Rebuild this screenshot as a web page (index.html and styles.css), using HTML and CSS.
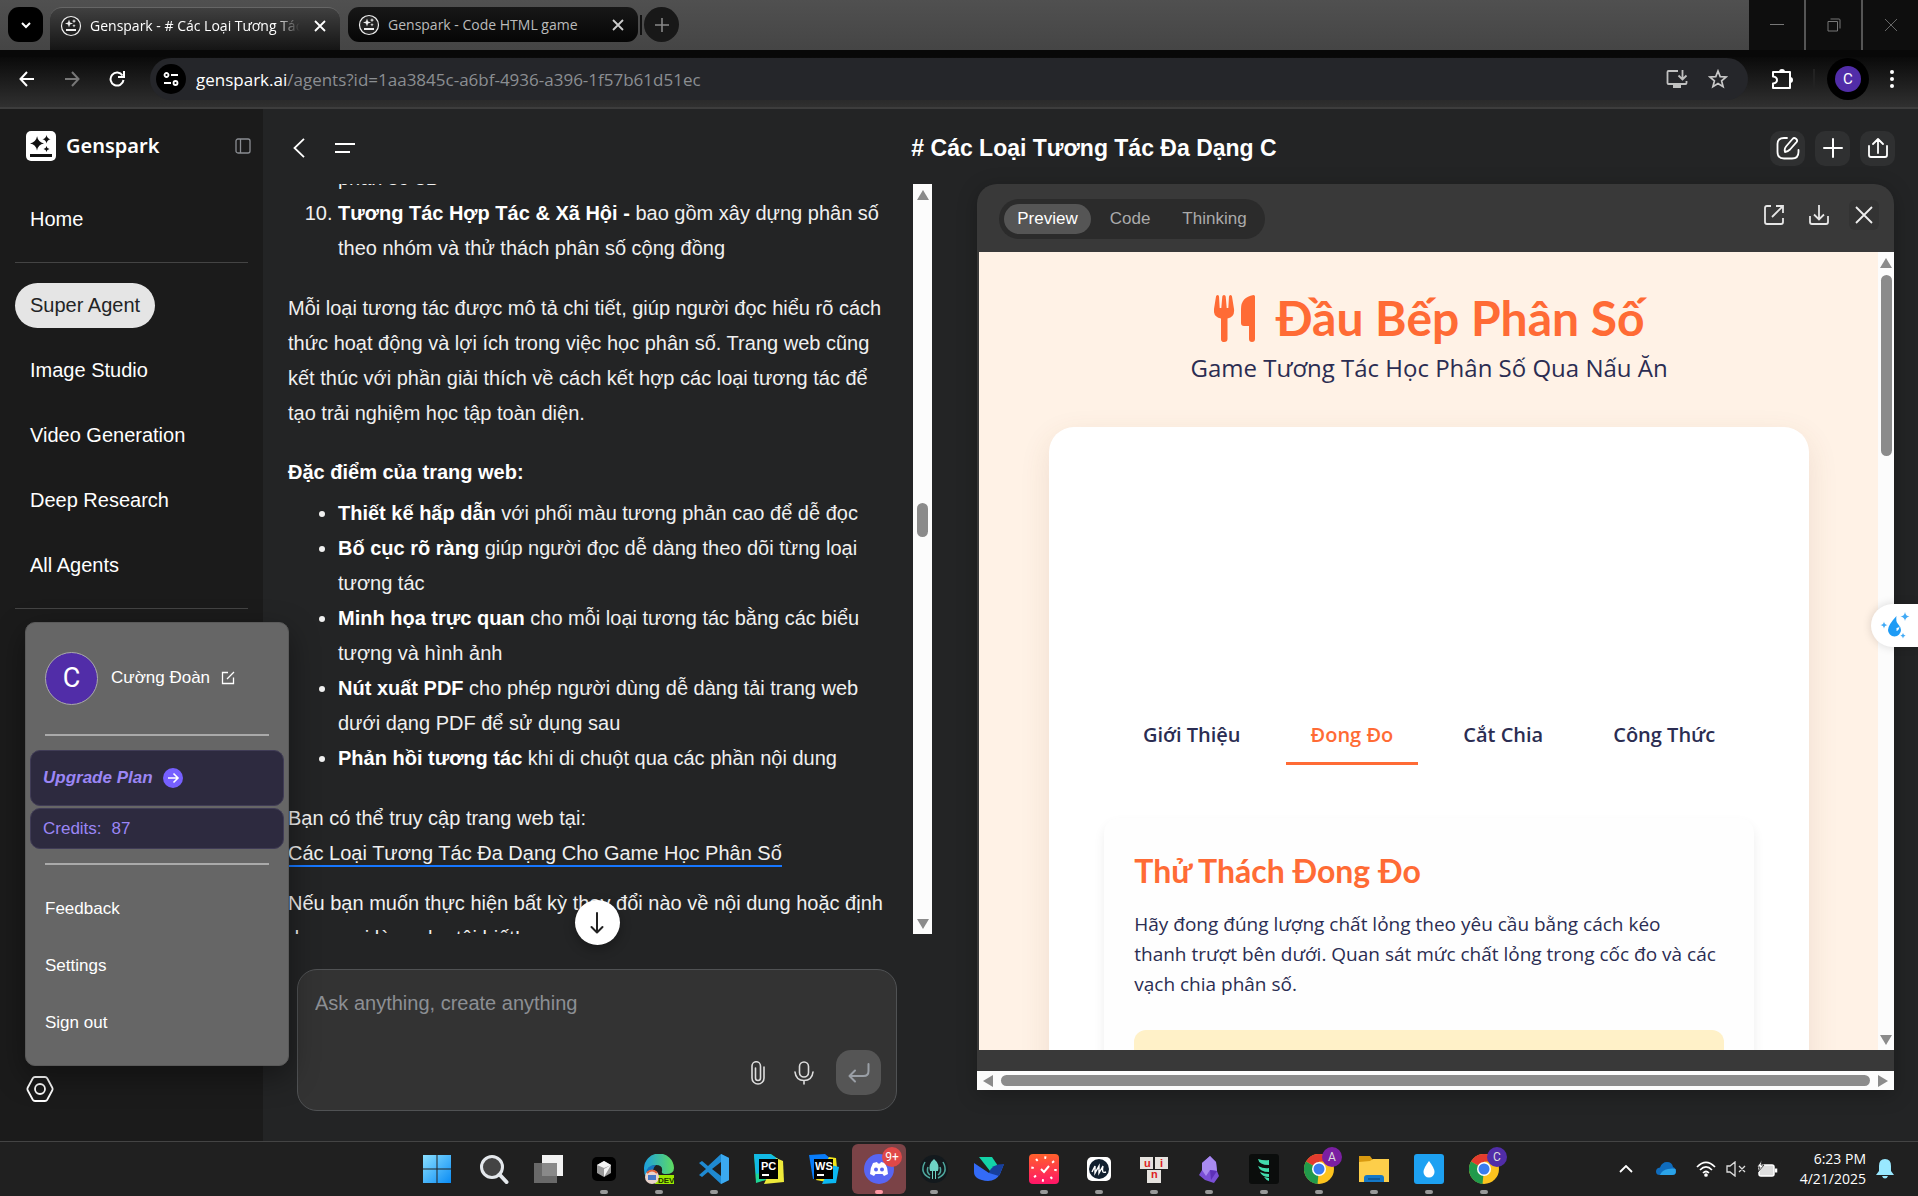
FILE: index.html
```html
<!DOCTYPE html>
<html lang="vi">
<head>
<meta charset="utf-8">
<title>Genspark - # Các Loại Tương Tác Đa Dạng C</title>
<link rel="stylesheet" href="styles.css">
</head>
<body>
<header class="browser">
  <div class="tabstrip">
    <button class="tab-search" aria-label="Search tabs"><svg width="12" height="12" viewBox="0 0 12 12"><path d="M2 4l4 4 4-4" stroke="#fff" stroke-width="2" fill="none"/></svg></button>
    <div class="tab tab-active">
      <svg class="favicon" width="22" height="22" viewBox="0 0 22 22"><circle cx="11" cy="11" r="9.500" fill="#222" stroke="#eee" stroke-width="1.200"/><path d="M9 4.500l1 3 3 1-3 1-1 3-1-3-3-1 3-1zM14 4l.6 1.500 1.500.6-1.500.6-.6 1.500-.6-1.500-1.500-.6 1.500-.6zM14 9l.5 1.200 1.200.5-1.200.5-.5 1.200-.5-1.200-1.200-.5 1.200-.5zM6 14h10v2H6z" fill="#eee"/></svg>
      <span class="tab-title">Genspark - # Các Loại Tương Tác</span>
      <button class="plain" aria-label="Close tab"><svg width="12" height="12" viewBox="0 0 12 12"><path d="M1 1l10 10M11 1L1 11" stroke="#fff" stroke-width="1.800"/></svg></button>
    </div>
    <div class="tab tab-idle">
      <svg class="favicon" width="22" height="22" viewBox="0 0 22 22"><circle cx="11" cy="11" r="9.500" fill="#222" stroke="#eee" stroke-width="1.200"/><path d="M9 4.500l1 3 3 1-3 1-1 3-1-3-3-1 3-1zM14 4l.6 1.500 1.500.6-1.500.6-.6 1.500-.6-1.500-1.500-.6 1.500-.6zM14 9l.5 1.200 1.200.5-1.200.5-.5 1.200-.5-1.200-1.200-.5 1.200-.5zM6 14h10v2H6z" fill="#eee"/></svg>
      <span class="tab-title">Genspark - Code HTML game</span>
      <button class="plain" aria-label="Close tab"><svg width="12" height="12" viewBox="0 0 12 12"><path d="M1 1l10 10M11 1L1 11" stroke="#ccc" stroke-width="1.800"/></svg></button>
    </div>
    <i class="tab-sep"></i>
    <button class="new-tab" aria-label="New tab"><svg width="14" height="14" viewBox="0 0 14 14"><path d="M7 0v14M0 7h14" stroke="#888" stroke-width="1.600"/></svg></button>
    <div class="window-controls">
      <button aria-label="Minimize"><svg width="14" height="14" viewBox="0 0 14 14"><path d="M0 6.500h14" stroke="#777"/></svg></button>
      <button aria-label="Restore"><svg width="14" height="14" viewBox="0 0 14 14" fill="none" stroke="#777"><path d="M1 3.500h9.500V13H1zM3.500 1H12q1 0 1 1v8.500"/></svg></button>
      <button aria-label="Close"><svg width="14" height="14" viewBox="0 0 14 14"><path d="M1 1l12 12M13 1L1 13" stroke="#666"/></svg></button>
    </div>
  </div>
  <div class="toolbar">
    <button class="plain nav" aria-label="Back"><svg width="16" height="16" viewBox="0 0 16 16" fill="none" stroke="#fff" stroke-width="2"><path d="M15 8H2M8 1L1.500 8 8 15"/></svg></button>
    <button class="plain nav" aria-label="Forward"><svg width="16" height="16" viewBox="0 0 16 16" fill="none" stroke="#777" stroke-width="2"><path d="M1 8h13M8 1l6.500 7L8 15"/></svg></button>
    <button class="plain nav" aria-label="Reload"><svg width="16" height="16" viewBox="0 0 16 16" fill="none" stroke="#fff" stroke-width="2"><path d="M13.500 4.500A6.500 6.500 0 1 0 14.500 9"/><path d="M15 0v6H9"/></svg></button>
    <div class="omnibox">
      <button class="site-info" aria-label="Site information"><svg width="16" height="16" viewBox="0 0 16 16" fill="none" stroke="#fff" stroke-width="1.800"><circle cx="3.500" cy="4" r="2"/><path d="M8 4h7M1 12h7"/><circle cx="12.500" cy="12" r="2"/></svg></button>
      <a class="url" href="#">genspark.ai<span>/agents?id=1aa3845c-a6bf-4936-a396-1f57b61d51ec</span></a>
      <button class="plain" aria-label="Install app"><svg width="22" height="20" viewBox="0 0 22 20" fill="none" stroke="#c0c0c0" stroke-width="1.800"><path d="M12 2H2.500Q1.500 2 1.500 3v11q0 1 1 1h17q1 0 1-1v-2M16.500 1v9M12.500 6.500l4 4 4-4"/><path d="M7 17.500h8" stroke-width="3"/></svg></button>
      <button class="plain" aria-label="Bookmark"><svg width="20" height="20" viewBox="0 0 20 20" fill="none" stroke="#c8c8c8" stroke-width="1.700"><path d="M10 2l2.200 5.600 6 .4-4.600 3.900 1.500 5.800L10 14.500l-5.100 3.200 1.500-5.800L1.800 8l6-.4z"/></svg></button>
    </div>
    <button class="plain ext" aria-label="Extensions"><svg width="22" height="22" viewBox="0 0 22 22"><path d="M2 4h17v16H2v-4.500q4-.5 4-3.500t-4-3.500z" fill="none" stroke="#fff" stroke-width="2" stroke-linejoin="round"/><path d="M8 4a3 3 0 0 1 6 0zM19 9a3 3 0 0 1 0 6z" fill="#fff"/></svg></button>
    <i class="bar-sep"></i>
    <button class="profile" aria-label="Profile"><span>C</span></button>
    <button class="plain" aria-label="Menu"><svg width="6" height="20" viewBox="0 0 6 20" fill="#fff"><circle cx="3" cy="3" r="2"/><circle cx="3" cy="10" r="2"/><circle cx="3" cy="17" r="2"/></svg></button>
  </div>
</header>

<div class="app">
  <aside class="sidebar">
    <div class="brand">
      <svg width="30" height="30" viewBox="0 0 30 30"><rect width="30" height="30" rx="5" fill="#fff"/><path d="M11 5q1 6 7 7.500-6 1-7 7-1-6-7-7 6-1.500 7-7zM20.500 4q.5 3.500 4 4.200-3.500.8-4 4.200-.5-3.400-4-4.200 3.500-.7 4-4.200zM20.500 15q.3 2.600 3 3-2.700.5-3 3-.3-2.500-3-3 2.700-.4 3-3zM4 23h22v3H4z" fill="#111"/></svg>
      <span class="brand-name">Genspark</span>
      <button class="plain" aria-label="Collapse sidebar"><svg width="16" height="16" viewBox="0 0 16 16" fill="none" stroke="#8a8d92" stroke-width="1.300"><rect x="1" y="1" width="14" height="14" rx="2"/><path d="M5.500 1v14"/></svg></button>
    </div>
    <nav class="side-nav">
      <a href="#" class="home">Home</a>
      <hr>
      <a href="#" class="current">Super Agent</a>
      <a href="#">Image Studio</a>
      <a href="#">Video Generation</a>
      <a href="#">Deep Research</a>
      <a href="#">All Agents</a>
      <hr>
    </nav>
    <button class="plain gear" aria-label="Settings"><svg width="28" height="26" viewBox="0 0 28 26" fill="none" stroke="#fff" stroke-width="1.800"><path d="M9 1h10q1.500 0 2.200 1.200l5 9.300q.8 1.500 0 3l-5 9.300Q20.500 25 19 25H9q-1.500 0-2.200-1.200l-5-9.300q-.8-1.500 0-3l5-9.300Q7.500 1 9 1z"/><circle cx="14" cy="13" r="5"/></svg></button>
    <section class="account-menu">
      <div class="account">
        <span class="avatar">C</span>
        <span>Cường Đoàn</span>
        <svg width="14" height="14" viewBox="0 0 14 14" fill="none" stroke="#fff" stroke-width="1.300"><path d="M7 1.500H1.500v11h11V6.500M6 8l7-7"/></svg>
      </div>
      <hr>
      <div class="plan">
        <a href="#" class="upgrade">Upgrade Plan <svg width="20" height="20" viewBox="0 0 20 20"><circle cx="10" cy="10" r="10" fill="#7660ff"/><path d="M5 10h9.500M10.500 5.500L15 10l-4.500 4.500" fill="none" stroke="#fff" stroke-width="1.600"/></svg></a>
        <a href="#" class="credits"><span>Credits:</span><span>87</span></a>
      </div>
      <hr>
      <a href="#" class="menu-item">Feedback</a>
      <a href="#" class="menu-item">Settings</a>
      <a href="#" class="menu-item">Sign out</a>
    </section>
  </aside>

  <main class="main">
    <header class="main-head">
      <div class="head-left">
        <button class="plain" aria-label="Back"><svg width="12" height="20" viewBox="0 0 12 20" fill="none" stroke="#fff" stroke-width="1.800"><path d="M11 .8L1.500 10l9.500 9.200"/></svg></button>
        <button class="plain" aria-label="Menu"><svg width="20" height="12" viewBox="0 0 20 12" stroke="#fff" stroke-width="1.800"><path d="M0 2h20M0 10h15"/></svg></button>
      </div>
      <h1># Các Loại Tương Tác Đa Dạng C</h1>
      <div class="head-right">
        <button aria-label="Edit"><svg width="24" height="24" viewBox="0 0 24 24" fill="none" stroke="#fff" stroke-width="1.800" stroke-linecap="round" stroke-linejoin="round"><path d="M11 2H8Q1.500 2 1.500 8v8Q1.500 22.500 8 22.500h8q6.500 0 6.500-6.500v-2"/><path d="M9 16q-1-3 1-5.500l6.500-7.500q1.500-1.800 3.500-.3 2 1.700.5 3.500L14 13.500Q12 15.500 9 16z"/></svg></button>
        <button aria-label="New"><svg width="20" height="20" viewBox="0 0 20 20" stroke="#fff" stroke-width="2" stroke-linecap="round"><path d="M10 1v18M1 10h18"/></svg></button>
        <button aria-label="Share"><svg width="20" height="20" viewBox="0 0 20 20" fill="none" stroke="#fff" stroke-width="1.800" stroke-linecap="round" stroke-linejoin="round"><path d="M1 8v9q0 2 2 2h14q2 0 2-2V8M10 15V1M5 6l5-5 5 5"/></svg></button>
      </div>
    </header>

    <div class="columns">
      <section class="chat">
        <div class="messages">
          <article class="message">
            <ol>
              <li class="tail">phân số 3D</li>
              <li value="10"><b>Tương Tác Hợp Tác &amp; Xã Hội -</b> bao gồm xây dựng phân số theo nhóm và thử thách phân số cộng đồng</li>
            </ol>
            <p>Mỗi loại tương tác được mô tả chi tiết, giúp người đọc hiểu rõ cách thức hoạt động và lợi ích trong việc học phân số. Trang web cũng kết thúc với phần giải thích về cách kết hợp các loại tương tác để tạo trải nghiệm học tập toàn diện.</p>
            <h2>Đặc điểm của trang web:</h2>
            <ul>
              <li><b>Thiết kế hấp dẫn</b> với phối màu tương phản cao để dễ đọc</li>
              <li><b>Bố cục rõ ràng</b> giúp người đọc dễ dàng theo dõi từng loại tương tác</li>
              <li><b>Minh họa trực quan</b> cho mỗi loại tương tác bằng các biểu tượng và hình ảnh</li>
              <li><b>Nút xuất PDF</b> cho phép người dùng dễ dàng tải trang web dưới dạng PDF để sử dụng sau</li>
              <li><b>Phản hồi tương tác</b> khi di chuột qua các phần nội dung</li>
            </ul>
            <p class="access">Bạn có thể truy cập trang web tại:<br><a href="#">Các Loại Tương Tác Đa Dạng Cho Game Học Phân Số</a></p>
            <p>Nếu bạn muốn thực hiện bất kỳ thay đổi nào về nội dung hoặc định dạng, vui lòng cho tôi biết!</p>
          </article>
          <div class="vbar" aria-hidden="true">
            <svg width="12" height="10" viewBox="0 0 12 10"><path d="M6 0l6 10H0z" fill="#8b8b8b"/></svg>
            <i class="vthumb mid"></i>
            <svg width="12" height="10" viewBox="0 0 12 10"><path d="M0 0h12L6 10z" fill="#8b8b8b"/></svg>
          </div>
          <button class="to-bottom" aria-label="Scroll to bottom"><svg width="14" height="22" viewBox="0 0 14 22" fill="none" stroke="#222" stroke-width="2" stroke-linecap="round" stroke-linejoin="round"><path d="M7 1v19M1.500 15L7 20.500l5.500-5.500"/></svg></button>
        </div>
        <form class="composer">
          <textarea placeholder="Ask anything, create anything" aria-label="Message"></textarea>
          <div class="composer-actions">
            <button type="button" class="plain" aria-label="Attach"><svg width="14" height="24" viewBox="0 0 14 24" fill="none" stroke="#ddd" stroke-width="1.600" stroke-linecap="round"><path d="M13 6v11a6 6 0 0 1-12 0V5a4 4 0 0 1 8.500 0v12a2.500 2.500 0 0 1-5 0V7"/></svg></button>
            <button type="button" class="plain" aria-label="Dictate"><svg width="20" height="24" viewBox="0 0 20 24" fill="none" stroke="#ddd" stroke-width="1.600" stroke-linecap="round"><rect x="5.500" y="1" width="9" height="15" rx="4.500"/><path d="M1 11q1 8.500 9 8.500t9-8.500M10 19.500V23"/></svg></button>
            <button type="submit" class="send" aria-label="Send"><svg width="22" height="20" viewBox="0 0 22 20" fill="none" stroke="#9a9fa6" stroke-width="2" stroke-linecap="round" stroke-linejoin="round"><path d="M20.500 1v7q0 5-5 5H2M7 7.500L1.500 13 7 18.500"/></svg></button>
          </div>
        </form>
      </section>

      <section class="preview">
        <div class="preview-head">
          <div class="segmented">
            <button class="on">Preview</button><button>Code</button><button>Thinking</button>
          </div>
          <div class="preview-actions">
            <button aria-label="Open"><svg width="20" height="20" viewBox="0 0 20 20" fill="none" stroke="#e6e6e6" stroke-width="1.800"><path d="M7 1H3Q1 1 1 3v14q0 2 2 2h14q2 0 2-2v-4M12 1h7v7M19 1L8 12"/></svg></button>
            <button aria-label="Download"><svg width="20" height="20" viewBox="0 0 20 20" fill="none" stroke="#e6e6e6" stroke-width="1.800"><path d="M1 11v6q0 2 2 2h14q2 0 2-2v-6M10 0v14M5 9.500l5 5 5-5"/></svg></button>
            <button class="close" aria-label="Close"><svg width="18" height="18" viewBox="0 0 18 18" stroke="#eee" stroke-width="1.800"><path d="M1 1l16 16M17 1L1 17"/></svg></button>
          </div>
        </div>
        <div class="frame">
          <div class="game">
            <h2 class="game-title"><svg width="42" height="47" viewBox="0 0 42 47" fill="#ff6b35"><path d="M2 1.500Q2.200 0 3.600 0T5 1.500L5.700 13h1.600L8.300 1.500Q8.500 0 10 0t1.700 1.500L12.700 13h1.600L15 1.500Q15.200 0 16.500 0t1.500 1.500L20 14q1 8-6.500 9.500V44q0 3-3.300 3T7 44V23.500Q-1 22 0 14z"/><path d="M39.500 0Q41 0 41 1.500V44q0 3-3 3t-3-3V31h-5q-3 0-3-3V14Q27 2 39.500 0z"/></svg>Đầu Bếp Phân Số</h2>
            <p class="game-sub">Game Tương Tác Học Phân Số Qua Nấu Ăn</p>
            <div class="game-card">
              <nav class="game-tabs">
                <button>Giới Thiệu</button><button class="on">Đong Đo</button><button>Cắt Chia</button><button>Công Thức</button>
              </nav>
              <div class="challenge">
                <h3>Thử Thách Đong Đo</h3>
                <p>Hãy đong đúng lượng chất lỏng theo yêu cầu bằng cách kéo<br>thanh trượt bên dưới. Quan sát mức chất lỏng trong cốc đo và các vạch chia phân số.</p>
                <div class="hint"></div>
              </div>
            </div>
          </div>
          <div class="vbar frame-bar" aria-hidden="true">
            <svg width="12" height="10" viewBox="0 0 12 10"><path d="M6 0l6 10H0z" fill="#8b8b8b"/></svg>
            <i class="vthumb top"></i>
            <svg width="12" height="10" viewBox="0 0 12 10"><path d="M0 0h12L6 10z" fill="#8b8b8b"/></svg>
          </div>
        </div>
        <div class="hbar" aria-hidden="true">
          <svg width="10" height="12" viewBox="0 0 10 12"><path d="M10 0v12L0 6z" fill="#8b8b8b"/></svg>
          <i></i>
          <svg width="10" height="12" viewBox="0 0 10 12"><path d="M0 0l10 6L0 12z" fill="#8b8b8b"/></svg>
        </div>
      </section>
    </div>
  </main>
  <button class="assistant" aria-label="Assistant"><svg width="30" height="28" viewBox="0 0 30 28" fill="#1e9bf5"><path d="M16.500 4q-1 5 1.500 8 3 3 3 6a6.500 6.500 0 0 1-13 0q0-5 8.500-14z"/><path d="M25 0q.5 4 4.500 4.500Q25.500 5 25 9q-.5-4-4.500-4.500Q24.500 4 25 0zM4 9.500q.4 3.200 3.600 3.600Q4.400 13.500 4 16.700q-.4-3.200-3.600-3.600Q3.600 12.700 4 9.500zM23 21q.3 2.400 2.600 2.700-2.300.3-2.600 2.700-.3-2.400-2.600-2.700Q22.700 23.400 23 21z" opacity=".85"/><path d="M16.500 16q2.500 0 3-2-.2 4.500-3 5z" fill="#fff"/></svg></button>
</div>

<footer class="taskbar">
  <div class="apps">
    <button class="start" aria-label="Start"><svg width="30" height="30" viewBox="0 0 30 30"><defs><linearGradient id="win" x1="0" y1="0" x2="1" y2="1"><stop offset="0" stop-color="#8ae0ff"/><stop offset="1" stop-color="#0a8cf5"/></linearGradient></defs><path d="M1 1h13.500v13.500H1zM15.500 1H29v13.500H15.500zM1 15.500h13.500V29H1zM15.500 15.500H29V29H15.500z" fill="url(#win)"/></svg></button>
    <button aria-label="Search"><svg width="30" height="30" viewBox="0 0 30 30" fill="none" stroke="#e4e8ec"><circle cx="13" cy="13" r="10.500" stroke-width="3" fill="#444"/><path d="M20.500 20.500l7 7.500" stroke-width="4" stroke-linecap="round"/></svg></button>
    <button aria-label="Task view"><svg width="30" height="30" viewBox="0 0 30 30"><path d="M8 1h21v21H8z" fill="#f2f2f2"/><path d="M0 9h23v20H0z" fill="#777" opacity=".85"/></svg></button>
    <button class="run" aria-label="Cursor"><svg width="30" height="30" viewBox="0 0 30 30"><rect x="3" y="3" width="24" height="24" rx="5" fill="#000"/><path d="M15 7l7 4v8l-7 4-7-4v-8z" fill="#999"/><path d="M15 15l7-4-7 12zM8 11l7-4 7 4-7 3z" fill="#f4f4f4"/></svg></button>
    <button class="run" aria-label="Edge Dev"><svg width="30" height="30" viewBox="0 0 30 30"><defs><linearGradient id="edge"><stop offset="0" stop-color="#1c9fe0"/><stop offset="1" stop-color="#5fdc60"/></linearGradient></defs><path d="M0 15a15 15 0 0 1 30-1q0 6-8 6-5 0-4-3 1-6-6-6Q4 11 2 23 0 20 0 15z" fill="url(#edge)"/><path d="M2 20q0-9 10-9-5 4-1 11l5 7Q6 30 2 20z" fill="#1572c0"/><path d="M11 21h19v9H11z" fill="#9be800"/><circle cx="8" cy="23" r="7" fill="#e9d3cb"/><path d="M4 21h8v5H4z" fill="#4678c8"/><path d="M3 19q5-5 10 0" stroke="#e0613b" stroke-width="2" fill="none"/><text x="14" y="28.500" class="ico-dev">DEV</text></svg></button>
    <button class="run" aria-label="VS Code"><svg width="30" height="30" viewBox="0 0 30 30"><path d="M22 0l8 4v22l-8 4L9 18l-6 5-3-2 7-6-7-6 3-2 6 5z" fill="#1f8ad2"/><path d="M22 8v14l-9-7z" fill="#202020"/><path d="M22 0l8 4v22l-8 4z" fill="#3ba9f0"/></svg></button>
    <button aria-label="PyCharm"><svg width="30" height="30" viewBox="0 0 30 30"><path d="M0 0h17l7 5-6 19-16 5z" fill="#1fd695"/><path d="M0 0h16l8 5-4 10L2 20z" fill="#12b9e5"/><path d="M22 4l7 3 1 21-20 2z" fill="#eeea3a"/><path d="M5 5h19v20H5z"/><text x="7" y="16" class="ico-text">PC</text><path d="M8 20h7v2H8z" fill="#fff"/></svg></button>
    <button aria-label="WebStorm"><svg width="30" height="30" viewBox="0 0 30 30"><path d="M0 1l16-1 6 5v19L4 25z" fill="#087cfa"/><path d="M20 3l7 1 1 10-5 15-16-3z" fill="#f2e61c"/><path d="M22 11l8 2-3 16-14 1z" fill="#0bb8f3"/><path d="M5 5h19v20H5z"/><text x="6" y="16" class="ico-text">WS</text><path d="M8 20h7v2H8z" fill="#fff"/></svg></button>
    <button class="run alert" aria-label="Discord"><svg width="30" height="30" viewBox="0 0 30 30"><circle cx="15" cy="15" r="15" fill="#5865f2"/><path d="M9 9l4-1 1 1.500h2L17 8l4 1q3 5 3 11l-4 2-1.500-2h-7L10 22l-4-2q0-6 3-11z" fill="#fff"/><circle cx="12" cy="15.500" r="2" fill="#5865f2"/><circle cx="18" cy="15.500" r="2" fill="#5865f2"/></svg><span class="badge red">9+</span></button>
    <button class="run" aria-label="GitKraken"><svg width="30" height="30" viewBox="0 0 30 30"><circle cx="15" cy="15" r="14" fill="#13191d"/><path d="M15 5q6 5 4 12h-2v8h-1v-8h-2v8h-1v-8h-2Q9 10 15 5z" fill="#6fd3c5"/><path d="M6 8q-6 11 5 16M24 8q6 11-5 16M9 13q-2 5 2 8M21 13q2 5-2 8" stroke="#4fa89e" stroke-width="1.500" fill="none"/></svg></button>
    <button aria-label="Designer"><svg width="30" height="30" viewBox="0 0 30 30"><path d="M5 3h13l6 9-8 5Z" fill="#13d3a8"/><path d="M0 9l15 10 15-9-4 10q-4 7-12 7Q0 26 0 18z" fill="#336bf7"/><path d="M15 19q2-9 15-9l-5 12z" fill="#173f9c"/></svg></button>
    <button class="run" aria-label="Clock"><svg width="30" height="30" viewBox="0 0 30 30"><defs><linearGradient id="clk" x2="0" y2="1"><stop offset="0" stop-color="#ff612b"/><stop offset="1" stop-color="#ff1568"/></linearGradient></defs><rect width="30" height="30" rx="4" fill="url(#clk)"/><circle cx="15" cy="15" r="11.500" fill="none" stroke="#fff" stroke-width="2.500" stroke-dasharray="2 7.030"/><path d="M12 15l3 3 5-6" stroke="#fff" stroke-width="2" fill="none"/></svg></button>
    <button class="run" aria-label="Notes"><svg width="30" height="30" viewBox="0 0 30 30"><rect x="3" y="3" width="24" height="24" rx="5" fill="#fff"/><circle cx="15" cy="15" r="10" fill="#111f2e"/><path d="M8 18l3-6v7l4-7v7l4-7q-2 8 3 6" stroke="#fff" stroke-width="1.400" fill="none"/></svg></button>
    <button class="run" aria-label="UniKey"><svg width="30" height="30" viewBox="0 0 30 30"><path d="M1 3h13v12H1zM16 3h13v12H16zM8 16h14v13H8z" fill="#e6e3df"/><text x="5" y="13" class="ico-key">u</text><text x="21" y="13" class="ico-key">i</text><text x="12" y="24" class="ico-key">n</text></svg></button>
    <button class="run" aria-label="Obsidian"><svg width="30" height="30" viewBox="0 0 30 30"><path d="M16 2l6 6 1 9 2 5-5 7-9-3-6-5 3-5V9z" fill="#7a4fd6"/><path d="M16 2l6 6 1 9-7-1-4 6-4-6V9z" fill="#a98bf0"/><path d="M16 16l7 1-6 9z" fill="#5d30b8"/></svg></button>
    <button class="run" aria-label="Filmora"><svg width="30" height="30" viewBox="0 0 30 30"><rect width="30" height="30" rx="3" fill="#0b0d0c"/><path d="M9 5q6 2 11 1v5Q10 11 9 5zM9 12q6 3 11 2v4Q11 18 9 12zM11 18q4 2 9 2v3q-7 0-9-5zM15 23l5 1v3q-3-1-5-4z" fill="#42dcae"/></svg></button>
    <button class="run" aria-label="Chrome A"><svg width="30" height="30" viewBox="0 0 30 30"><circle cx="15" cy="15" r="15" fill="#fcc31e"/><path d="M15 15L2 7.500a15 15 0 0 1 26 0H15z" fill="#e33b2e"/><path d="M15 15l-1.500 15A15 15 0 0 1 2 7.500z" fill="#219a4b"/><circle cx="15" cy="15" r="7" fill="#fff"/><circle cx="15" cy="15" r="5.500" fill="#3a7df0"/></svg><span class="badge violet">A</span></button>
    <button class="run" aria-label="Explorer"><svg width="30" height="30" viewBox="0 0 30 30"><path d="M0 2h11l3 4h10v10H0z" fill="#d99a10"/><path d="M0 8l11-1 3-2h16v23H0z" fill="#fdce4a"/><path d="M5 28v-4q0-3 3-3h14q3 0 3 3v4z" fill="#1478c8"/><path d="M9 25h12" stroke="#0b508c" stroke-width="1.500"/></svg></button>
    <button class="run" aria-label="Drop"><svg width="30" height="30" viewBox="0 0 30 30"><rect width="30" height="30" rx="3" fill="#1da1f2"/><path d="M15 7q5.500 7 5.500 11a5.500 5.500 0 0 1-11 0q0-4 5.500-11z" fill="#fff"/></svg></button>
    <button class="run" aria-label="Chrome C"><svg width="30" height="30" viewBox="0 0 30 30"><circle cx="15" cy="15" r="15" fill="#fcc31e"/><path d="M15 15L2 7.500a15 15 0 0 1 26 0H15z" fill="#e33b2e"/><path d="M15 15l-1.500 15A15 15 0 0 1 2 7.500z" fill="#219a4b"/><circle cx="15" cy="15" r="7" fill="#fff"/><circle cx="15" cy="15" r="5.500" fill="#3a7df0"/></svg><span class="badge indigo">C</span></button>
  </div>
  <div class="tray">
    <svg class="chev" width="14" height="8" viewBox="0 0 14 8" fill="none" stroke="#fff" stroke-width="1.800"><path d="M1 7l6-6 6 6"/></svg>
    <svg class="cloud" width="20" height="14" viewBox="0 0 20 14"><path d="M4 13Q0 13 0 9.500T4 5.500Q6 0 11 0t6 5q3 1 3 4.500T16 13z" fill="#0f6cbd"/><path d="M4 13q2-5 8-6 5-1 7.500 0Q21 13 16 13z" fill="#2ba3e8"/></svg>
    <svg width="20" height="16" viewBox="0 0 20 16" fill="none" stroke="#fff" stroke-width="1.700"><path d="M1 6q9-9 18 0M4 9q6-6 12 0M7 12q3-3 6 0"/><circle cx="10" cy="14" r="1" fill="#fff"/></svg>
    <svg width="20" height="16" viewBox="0 0 20 16" fill="none" stroke="#ddd" stroke-width="1.300"><path d="M1 5h3l5-4v14l-5-4H1zM13 5l6 6M19 5l-6 6"/></svg>
    <svg width="22" height="18" viewBox="0 0 22 18" fill="none" stroke="#fff" stroke-width="1.500"><rect x="3" y="5" width="15" height="11" rx="2" fill="#ddd"/><path d="M20 8.500v4" stroke-width="2.500"/><path d="M6 0L1 7h3L2 12l6-7H5z" fill="#fff" stroke="#202020" stroke-width=".8"/></svg>
    <div class="clock"><span>6:23 PM</span><span>4/21/2025</span></div>
    <svg width="18" height="20" viewBox="0 0 18 20" fill="#99e8ff"><path d="M9 0q6 0 6 7v5l3 4H0l3-4V7q0-7 6-7zM6 17h6q-1 2.500-3 2.500T6 17z"/></svg>
  </div>
</footer>
</body>
</html>
```
FILE: styles.css
```css
* { box-sizing: border-box; }

body {
  margin: 0;
  height: 100vh;
  display: flex;
  flex-direction: column;
  overflow: hidden;
  background: #232425;
  color: #fff;
  font-family: "Liberation Sans", Arial, sans-serif;
  font-size: 20px;
}

button { font: inherit; color: inherit; border: 0; padding: 0; background: none; display: flex; align-items: center; justify-content: center; }
a { color: inherit; text-decoration: none; }
svg { display: block; flex: none; }
h1, h2, h3, p, ul, ol { margin: 0; }
.plain { flex: none; }

/* Browser chrome */
.browser { flex: none; font-family: "Open Sans", "Noto Sans", sans-serif; background: #080808; border-bottom: 2px solid #3d3d3d; }
.tabstrip { display: flex; align-items: flex-start; height: 50px; padding: 7px 0 0 8px; background: linear-gradient(#505050, #454545); }
.tab-search { width: 35px; height: 35px; border-radius: 11px; background: #000; }
.tab { display: flex; align-items: center; width: 290px; padding: 0 14px 0 10px; font-size: 14px; }
.tab-active { height: 43px; margin-left: 7px; padding-bottom: 7px; border-radius: 12px 12px 0 0; border-top: 1px solid #666; background: linear-gradient(#404040, #151515); }
.tab-idle { height: 35px; margin-left: 8px; border-radius: 11px; background: linear-gradient(#171717, #060606); color: #bbb; }
.tab-title { flex: 1; margin: 0 14px 0 8px; overflow: hidden; white-space: nowrap; }
.tab-active .tab-title { mask-image: linear-gradient(90deg, #000 88%, transparent); }
.tab-sep { width: 2px; height: 20px; margin: 8px 2px 0; background: #111; }
.new-tab { width: 35px; height: 35px; border-radius: 50%; background: #181818; }
.window-controls { display: flex; gap: 2px; height: 50px; margin: -7px 0 0 auto; background: #555; }
.window-controls button { width: 55px; background: #0e0e0e; }
.toolbar { display: flex; align-items: center; height: 50px; margin-top: 7px; padding: 0 23px 6px 17px; background: linear-gradient(#0a0a0a, #303030); }
.nav { width: 20px; margin-right: 25px; }
.omnibox { flex: 1; display: flex; align-items: center; gap: 20px; height: 42px; margin-left: -2px; padding: 0 20px 0 6px; border-radius: 21px; background: #25262a; }
.site-info { width: 30px; height: 30px; border-radius: 50%; background: #000; }
.url { flex: 1; margin-left: -10px; font-size: 17px; }
.url span { color: #8b8e92; }
.ext { margin-left: 23px; }
.bar-sep { width: 2px; height: 20px; margin: 0 12px 0 20px; background: #222; }
.profile { width: 42px; height: 42px; margin-right: 20px; border-radius: 50%; background: #000; }
.profile span { width: 26px; height: 26px; border-radius: 50%; background: #512da8; font: 15px/26px Roboto, sans-serif; }

/* App shell */
.app { position: relative; flex: 1; min-height: 0; display: flex; }
.sidebar { position: relative; flex: none; width: 263px; display: flex; flex-direction: column; padding: 22px 12px 39px 15px; background: #1b1b1b; }
.brand { display: flex; align-items: center; height: 30px; padding-left: 11px; }
.brand-name { flex: 1; margin-left: 10px; font: 600 20px/30px "Noto Sans", sans-serif; }
.side-nav { display: flex; flex-direction: column; align-items: flex-start; gap: 20px; margin-top: 36px; }
.side-nav a { height: 45px; padding: 0 15px; border-radius: 23px; line-height: 45px; }
.side-nav .current { background: #e5e5e5; color: #232425; }
.side-nav hr { width: 233px; height: 1px; margin: 0; border: 0; background: #444; }
.gear { width: 50px; margin-top: auto; }

.account-menu { position: absolute; left: 25px; bottom: 75px; z-index: 5; width: 264px; height: 444px; padding: 29px 4px 0; border-radius: 10px; border: 1px solid #5a5a5a; background: #666; box-shadow: 0 10px 30px rgba(0, 0, 0, .4); font-size: 17px; }
.account { display: flex; align-items: center; gap: 11px; height: 52px; padding-left: 15px; }
.avatar { width: 53px; height: 53px; margin-right: 2px; border: 1px solid #aaa; border-radius: 50%; background: #512da8; font: 27px/51px Roboto, sans-serif; text-align: center; }
.account-menu hr { height: 2px; margin: 30px 15px 14px; border: 0; background: #aaa; }
.plan { display: flex; flex-direction: column; gap: 2px; color: #9b86f5; }
.plan a { display: flex; align-items: center; padding-left: 12px; border-radius: 10px; border: 1px solid #403c56; background: #2d2a3f; gap: 10px; }
.upgrade { height: 56px; font-weight: bold; font-style: italic; }
.credits { height: 41px; }
.account-menu .plan + hr { margin: 14px 15px 15px; }
.menu-item { display: block; height: 57px; padding-left: 15px; line-height: 57px; }

.main { flex: 1; min-width: 0; display: flex; flex-direction: column; }
.main-head { flex: none; display: grid; grid-template-columns: 1fr auto 1fr; align-items: center; height: 75px; padding: 3px 23px 0 30px; }
.main-head h1 { font-size: 23px; line-height: 30px; }
.head-left { display: flex; align-items: center; gap: 30px; }
.head-right { display: flex; justify-content: flex-end; gap: 10px; }
.head-right button { width: 35px; height: 35px; border-radius: 10px; background: #2f3031; }
.columns { flex: 1; min-height: 0; display: grid; grid-template-columns: minmax(0, 73fr) minmax(0, 100fr); gap: 45px; padding-right: 24px; }

/* Conversation */
.chat { display: flex; flex-direction: column; min-height: 0; }
.messages { position: relative; flex: 1; min-height: 0; display: flex; }
.message { flex: 1; overflow: hidden; padding: 0 20px 0 25px; color: #f0f0f0; line-height: 35px; }
.message ol { margin-top: -23px; }
.message ol, .message ul { padding-left: 50px; }
.message b, .message h2 { color: #fff; }
.message p { margin-top: 25px; }
.message h2 { margin: 24px 0 6px; font-size: 20px; }
.message .access a { padding-bottom: 1px; border-bottom: 2px solid #1677ff; }
.message .access + p { margin-top: 15px; }
.tail { list-style: none; }
.vbar { flex: none; width: 19px; display: flex; flex-direction: column; align-items: center; padding: 6px 0 5px; background: #fcfcfc; }
.vthumb { width: 11px; border-radius: 6px; background: #8b8b8b; }
.vthumb.mid { height: 34px; margin: auto 0; margin-top: 303px; }
.vthumb.top { height: 181px; margin: 7px 0 auto; }
.to-bottom { position: absolute; left: 50%; bottom: -11px; width: 45px; height: 45px; margin-left: -23px; border-radius: 50%; background: #fff; box-shadow: 0 4px 12px rgba(0, 0, 0, .3); }
.composer { flex: none; display: flex; flex-direction: column; height: 142px; margin: 35px 35px 30px 34px; padding: 17px 15px 15px 17px; border: 1px solid #505254; border-radius: 20px; background: #333; }
.composer textarea { flex: 1; width: 100%; padding: 0; border: 0; outline: 0; resize: none; background: none; color: #fff; font: 20px/32px "Liberation Sans", Arial, sans-serif; }
.composer textarea::placeholder { color: #8c8f94; }
.composer-actions { display: flex; align-items: center; justify-content: flex-end; gap: 29px; }
.send { width: 45px; height: 45px; margin-left: -7px; border-radius: 15px; background: #555; }

/* Preview */
.preview { display: flex; flex-direction: column; height: 906px; max-height: calc(100% - 51px); border-radius: 20px 20px 0 0; background: #393939; box-shadow: 0 4px 20px rgba(0, 0, 0, .25); }
.preview-head { flex: none; display: flex; justify-content: space-between; height: 68px; padding: 15px 15px 0 22px; }
.segmented { display: flex; gap: 6px; height: 40px; padding: 5px; border-radius: 20px; background: #2b2b2b; font-size: 17px; color: #aaa; }
.segmented button { padding: 0 13px; border-radius: 15px; }
.segmented .on { background: #555; color: #fff; }
.preview-actions { display: flex; gap: 15px; padding-top: 1px; }
.preview-actions button { width: 30px; height: 30px; border-radius: 6px; }
.preview-actions .close { background: #333; }
.frame { flex: 1; min-height: 0; display: flex; margin-left: 2px; overflow: hidden; }
.frame-bar { width: 16px; }
.hbar { flex: none; display: flex; align-items: center; gap: 8px; height: 19px; margin-top: 21px; padding: 0 6px; background: #fcfcfc; }
.hbar i { flex: 1; height: 11px; border-radius: 6px; background: #8b8b8b; }

.game { flex: 1; padding: 36px 69px 0 70px; overflow: hidden; background: #fff2e6; color: #2b2d52; font-family: "Open Sans", "Noto Sans", sans-serif; }
.game-title { display: flex; justify-content: center; align-items: center; gap: 20px; height: 60px; color: #ff6b35; font: 700 48px/60px Lato, "Noto Sans", sans-serif; }
.game-sub { height: 40px; text-align: center; font-size: 24px; line-height: 40px; }
.game-card { margin-top: 39px; height: 900px; padding: 277px 55px 0; border-radius: 25px; background: #fff; box-shadow: 0 10px 30px rgba(120, 70, 40, .12); }
.game-tabs { display: flex; justify-content: center; gap: 20px; }
.game-tabs button { height: 61px; padding: 2px 25px 0; border-bottom: 3px solid transparent; font-size: 20px; font-weight: 600; }
.game-tabs .on { border-color: #ff6b35; color: #ff6b35; }
.challenge { height: 500px; margin-top: 53px; padding: 30px; border-radius: 15px; background: #fefefe; box-shadow: 0 6px 12px rgba(0, 0, 0, .07); }
.challenge h3 { color: #ff6b35; font: 700 32px/45px Lato, "Noto Sans", sans-serif; }
.challenge p { margin-top: 16px; font-size: 19px; line-height: 30px; }
.hint { height: 100px; margin-top: 31px; border-radius: 12px; background: #fff1c8; }

.assistant { position: absolute; right: 0; top: 495px; width: 47px; height: 43px; border-radius: 22px 0 0 22px; background: #fff; box-shadow: 0 0 10px rgba(0, 0, 0, .15); }

/* Taskbar */
.taskbar { flex: none; display: flex; align-items: center; height: 55px; padding: 0 24px 0 410px; border-top: 1px solid #444; background: #202020; }
.apps { display: flex; gap: 1px; flex: 1; }
.apps button { position: relative; width: 54px; height: 50px; }
.apps .start { margin-right: 2px; }
.apps .run::after { content: ""; position: absolute; bottom: 0; left: 23px; width: 8px; height: 4px; border-radius: 2px; background: #999; }
.apps .alert { background: #7b4347; border-radius: 6px; }
.apps .alert::after { background: #ff99a4; }
.badge { position: absolute; right: 4px; top: 3px; width: 20px; height: 20px; border-radius: 50%; font: 12px/20px Roboto, sans-serif; text-align: center; }
.red { background: #e04848; }
.violet { background: #7b1fa2; color: #ddd; }
.indigo { background: #512da8; color: #ddd; }
.ico-text { font: bold 11px "Liberation Sans", sans-serif; fill: #fff; }
.ico-dev { font: bold 8px "Liberation Sans", sans-serif; fill: #223300; }
.ico-key { font: bold 11px "Liberation Sans", sans-serif; fill: #d22; }
.tray { display: flex; align-items: center; }
.tray svg { margin-right: 10px; }
.tray .chev { margin-right: 23px; }
.tray .cloud { margin-right: 20px; }
.clock { display: flex; flex-direction: column; width: 78px; margin: 0 10px 0 0; text-align: right; font: 14px/20px "Open Sans", sans-serif; }
.tray svg:last-child { margin: 0; }
```
